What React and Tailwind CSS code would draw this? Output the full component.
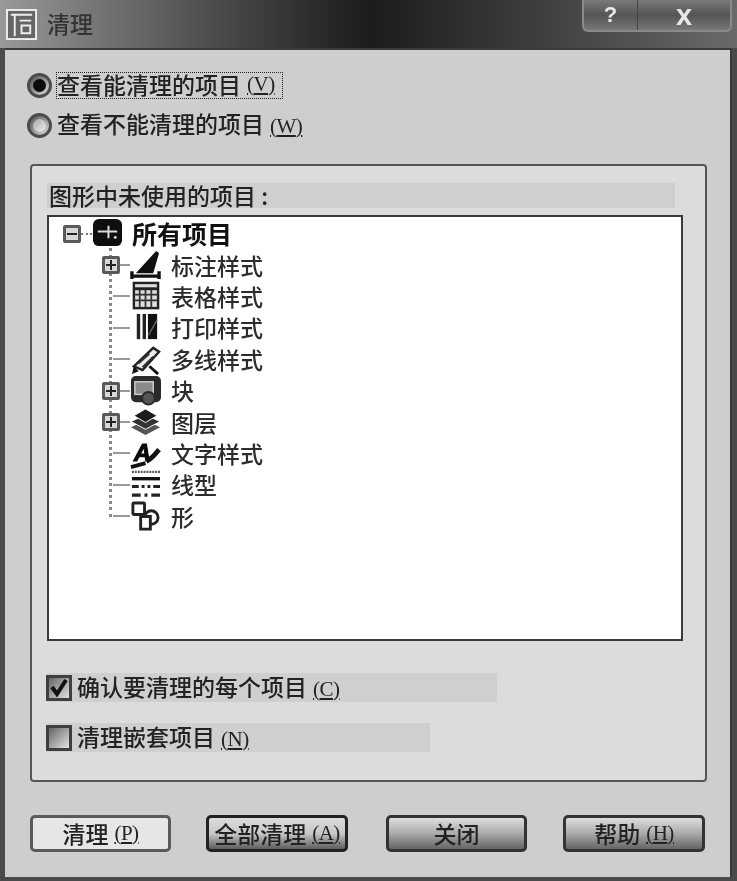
const font = { fontFamily: '"Noto Sans CJK SC", "Liberation Sans", sans-serif' };

function Mnemonic({ children }) {
    return (
        <span className="ml-[6px] text-[21px] tracking-[-0.5px] underline underline-offset-[2px] [font-family:'Liberation_Serif',serif]">
            ({children})
        </span>
    );
}

function Radio({ checked }) {
    return (
        <span className="-ml-[3px] flex h-[25px] w-[25px] shrink-0 items-center justify-center rounded-full border-[3px] border-[#4a4a4a] bg-gradient-to-br from-[#555] to-[#ddd]">
            <span className={"h-[13px] w-[13px] rounded-full " + (checked ? "bg-[#0c0c0c]" : "bg-gradient-to-br from-[#aaa] to-[#eee]")} />
        </span>
    );
}

function Checkbox({ checked }) {
    return (
        <span className="-ml-[1px] flex h-[26px] w-[26px] shrink-0 items-center justify-center border-[3px] border-[#3f3f3f] bg-gradient-to-br from-[#666] to-[#e4e4e4]">
            {checked && (
                <svg viewBox="0 0 20 20" className="h-[20px] w-[20px]">
                    <path d="M3 9l5 7L17 2" fill="none" stroke="#111" strokeWidth="4" />
                </svg>
            )}
        </span>
    );
}

function ExpandBox({ open }) {
    return (
        <span className="relative flex h-[18px] w-[18px] shrink-0 items-center justify-center rounded-[2px] border-[3px] border-[#5a5a5a] bg-[#d8d8d8]">
            <span className="absolute h-[2px] w-[10px] bg-[#222]" />
            {!open && <span className="absolute h-[10px] w-[2px] bg-[#222]" />}
        </span>
    );
}

const icons = {
    root: (
        <>
            <rect x="1" y="1" width="30" height="28" rx="6" fill="#0e0e0e" />
            <path d="M6 14h20M17 8v13" stroke="#ddd" strokeWidth="2" />
            <circle cx="24" cy="20" r="1.5" fill="#ddd" />
        </>
    ),
    dim: (
        <>
            <path d="M6 24L27 1l3 2-6 21z" fill="#111" />
            <path d="M1 27h30M2 22v8M30 22v8" stroke="#111" strokeWidth="3.5" fill="none" />
        </>
    ),
    table: (
        <>
            <rect x="4" y="2" width="25" height="26" fill="#ddd" stroke="#222" strokeWidth="2.5" />
            <path d="M4 8h25" stroke="#222" strokeWidth="3" />
            <path d="M4 14h25M4 20h25M10 9v19M16 9v19M22 9v19" stroke="#333" strokeWidth="1.8" />
        </>
    ),
    print: (
        <>
            <rect x="7" y="2" width="3.5" height="26" fill="#222" />
            <rect x="13" y="2" width="3.5" height="26" fill="#222" />
            <rect x="18.5" y="2" width="9.5" height="26" fill="#111" />
            <path d="M19 24L28 8" stroke="#666" strokeWidth="1.5" />
        </>
    ),
    multi: (
        <>
            <path d="M4 23L24 4l6 4-17 19z" fill="#ececec" stroke="#222" strokeWidth="2.5" />
            <path d="M9 20l11-10M13 24l11-11" stroke="#333" strokeWidth="2" />
            <path d="M2 31l7-3-5-5z" fill="#111" />
            <path d="M20 23l9 8" stroke="#111" strokeWidth="3" />
        </>
    ),
    block: (
        <>
            <rect x="1" y="1" width="31" height="27" rx="5" fill="#2a2a2a" />
            <rect x="5" y="7" width="19" height="13" fill="#8a8a8a" stroke="#ccc" strokeWidth="1.5" />
            <circle cx="19" cy="24" r="6.5" fill="#555" stroke="#2a2a2a" strokeWidth="2" />
        </>
    ),
    layers: (
        <>
            <path d="M1 21l15-7 15 7-15 8z" fill="#555" />
            <path d="M1 15l15-7 15 7-15 8z" fill="#333" stroke="#fff" strokeWidth="1" />
            <path d="M4 9l12-7 12 7-12 7z" fill="#1c1c1c" stroke="#fff" strokeWidth="1" />
        </>
    ),
    text: (
        <>
            <text x="4" y="24" fontSize="24" fontWeight="700" fontStyle="italic" fontFamily="Liberation Sans" fill="#0a0a0a" stroke="#0a0a0a" strokeWidth="1.2">A</text>
            <path d="M17 24c5-2 8-6 13-12" stroke="#111" strokeWidth="5" fill="none" />
            <path d="M1 30l15-4" stroke="#111" strokeWidth="4" />
        </>
    ),
    linetype: (
        <>
            <path d="M2 3h29" stroke="#555" strokeWidth="2.5" strokeDasharray="2 1" />
            <path d="M2 10h29" stroke="#111" strokeWidth="3.5" />
            <path d="M2 18h7M12 18h3M18 18h3M24 18h7" stroke="#222" strokeWidth="3" />
            <path d="M2 27h9M15 27h3M22 27h9" stroke="#222" strokeWidth="3.5" />
        </>
    ),
    shape: (
        <>
            <rect x="3" y="2" width="12" height="12" rx="1" fill="#fff" stroke="#222" strokeWidth="3" />
            <circle cx="22" cy="17" r="7" fill="#fff" stroke="#222" strokeWidth="3" />
            <path d="M11 16h10v13H11z" fill="#fff" stroke="#222" strokeWidth="3" />
        </>
    ),
};

function TreeIcon({ name }) {
    return (
        <svg viewBox="0 0 32 32" className="h-[31px] w-[31px] shrink-0">
            {icons[name]}
        </svg>
    );
}

const treeItems = [
    { icon: "dim", label: "标注样式", expand: true },
    { icon: "table", label: "表格样式" },
    { icon: "print", label: "打印样式" },
    { icon: "multi", label: "多线样式" },
    { icon: "block", label: "块", expand: true },
    { icon: "layers", label: "图层", expand: true },
    { icon: "text", label: "文字样式" },
    { icon: "linetype", label: "线型" },
    { icon: "shape", label: "形" },
];

function CaptionButtons() {
    return (
        <div className="mr-[5px] ml-auto flex h-[32px] self-start rounded-b-[6px] border-2 border-t-0 border-[#8a8a8a] bg-gradient-to-b from-[#7a7a7a] via-[#555] to-[#777] text-[#e8e8e8]">
            <span className="flex w-[54px] items-center justify-center border-r border-[#444] text-[22px] leading-none font-bold [font-family:'Liberation_Sans',sans-serif]">?</span>
            <span className="flex w-[92px] items-center justify-center text-[29px] leading-none font-bold [font-family:'Liberation_Sans',sans-serif]">x</span>
        </div>
    );
}

function DialogButton({ label, mnemonic, className }) {
    return (
        <button className={"flex h-[37px] w-[141px] items-center justify-center rounded-[5px] border-[3px] text-[23px] font-medium text-[#222] " + className}>
            {label}
            {mnemonic && <Mnemonic>{mnemonic}</Mnemonic>}
        </button>
    );
}

export default function App() {
    return (
        <div style={font} className="h-[881px] w-[737px] overflow-hidden bg-[#4a4a4a] leading-none text-[#222] blur-[0.7px]">
            {/* Title bar */}
            <div className="flex h-[48px] items-center bg-gradient-to-r from-[#999] via-[#1c1c1c] via-50% to-[#6a6a6a] pl-[6px]">
                <svg viewBox="0 0 32 32" className="h-[31px] w-[31px] shrink-0">
                    <rect x="1" y="1" width="30" height="30" fill="#666" stroke="#eee" strokeWidth="2" />
                    <path d="M5 6h22M9 6v22M14 12h12M16 17h9v8h-9z" fill="none" stroke="#eee" strokeWidth="2" />
                </svg>
                <span className="ml-[10px] pb-[2px] text-[23px] font-medium text-[#333]">清理</span>
                <CaptionButtons />
            </div>

            {/* Dialog body */}
            <div className="mx-[5px] h-[829px] border-t-2 border-r-2 border-[#3a3a3a] bg-[#cecece] pt-[22px] pr-[21px] pl-[25px]">
                <div className="flex h-[27px] items-center">
                    <Radio checked />
                    <span className="ml-[4px] flex h-[27px] w-[227px] items-center border border-dotted border-[#222] pb-[3px] text-[23px] font-medium whitespace-nowrap">
                        查看能清理的项目<Mnemonic>V</Mnemonic>
                    </span>
                </div>
                <div className="mt-[14px] flex h-[25px] items-center">
                    <Radio />
                    <span className="ml-[5px] pb-[2px] text-[23px] font-medium whitespace-nowrap">
                        查看不能清理的项目<Mnemonic>W</Mnemonic>
                    </span>
                </div>

                {/* Group box */}
                <div className="mt-[26px] h-[618px] w-[677px] rounded-[4px] border-2 border-[#555] bg-[#dcdcdc] pt-[17px] pl-[15px]">
                    <div className="flex h-[25px] w-[628px] items-center bg-[#cfcfcf] pl-[2px] text-[23px] font-medium whitespace-nowrap">
                        图形中未使用的项目 :
                    </div>

                    {/* Tree list */}
                    <div className="relative mt-[7px] h-[426px] w-[636px] border-2 border-[#3a3a3a] bg-white pt-[1px]">
                        <span className="absolute top-[31px] left-[60px] h-[269px] border-l-[3px] border-dotted border-[#888]" />
                        <div className="flex h-[31.4px] items-center pl-[14px]">
                            <ExpandBox open />
                            <span className="w-[11px] border-t-2 border-dotted border-[#777]" />
                            <TreeIcon name="root" />
                            <span className="ml-[9px] text-[25px] font-bold text-[#111]">所有项目</span>
                        </div>
                        {treeItems.map((item) => (
                            <div key={item.label} className="relative flex h-[31.4px] items-center pl-[53px]">
                                {item.expand ? (
                                    <ExpandBox />
                                ) : (
                                    <span className="ml-[11px] w-[7px] border-t-2 border-[#999]" />
                                )}
                                <span className="w-[10px] border-t-2 border-[#999]" />
                                <TreeIcon name={item.icon} />
                                <span className="ml-[10px] text-[23px] font-medium text-[#2c2c2c]">{item.label}</span>
                            </div>
                        ))}
                    </div>

                    {/* Options */}
                    <div className="mt-[32px] flex h-[29px] w-[450px] items-center bg-[#cfcfcf] text-[23px] font-medium">
                        <Checkbox checked />
                        <span className="ml-[5px] pb-[1px] whitespace-nowrap">确认要清理的每个项目<Mnemonic>C</Mnemonic></span>
                    </div>
                    <div className="mt-[21px] flex h-[29px] w-[383px] items-center bg-[#cfcfcf] text-[23px] font-medium">
                        <Checkbox />
                        <span className="ml-[5px] pb-[1px] whitespace-nowrap">清理嵌套项目<Mnemonic>N</Mnemonic></span>
                    </div>
                </div>

                {/* Buttons */}
                <div className="mt-[33px] flex">
                    <DialogButton label="清理" mnemonic="P" className="border-[#5a5a5a] bg-[#e6e6e6]" />
                    <DialogButton label="全部清理" mnemonic="A" className="ml-[35px] w-[142px] border-[#222] bg-gradient-to-b from-[#dcdcdc] via-[#c8c8c8] to-[#5e5e5e]" />
                    <DialogButton label="关闭" className="ml-[38px] border-[#333] bg-gradient-to-b from-[#dedede] via-[#aaaaaa] to-[#666666]" />
                    <DialogButton label="帮助" mnemonic="H" className="ml-[36px] w-[142px] border-[#333] bg-gradient-to-b from-[#dedede] via-[#aaaaaa] to-[#666666]" />
                </div>
            </div>
        </div>
    );
}
